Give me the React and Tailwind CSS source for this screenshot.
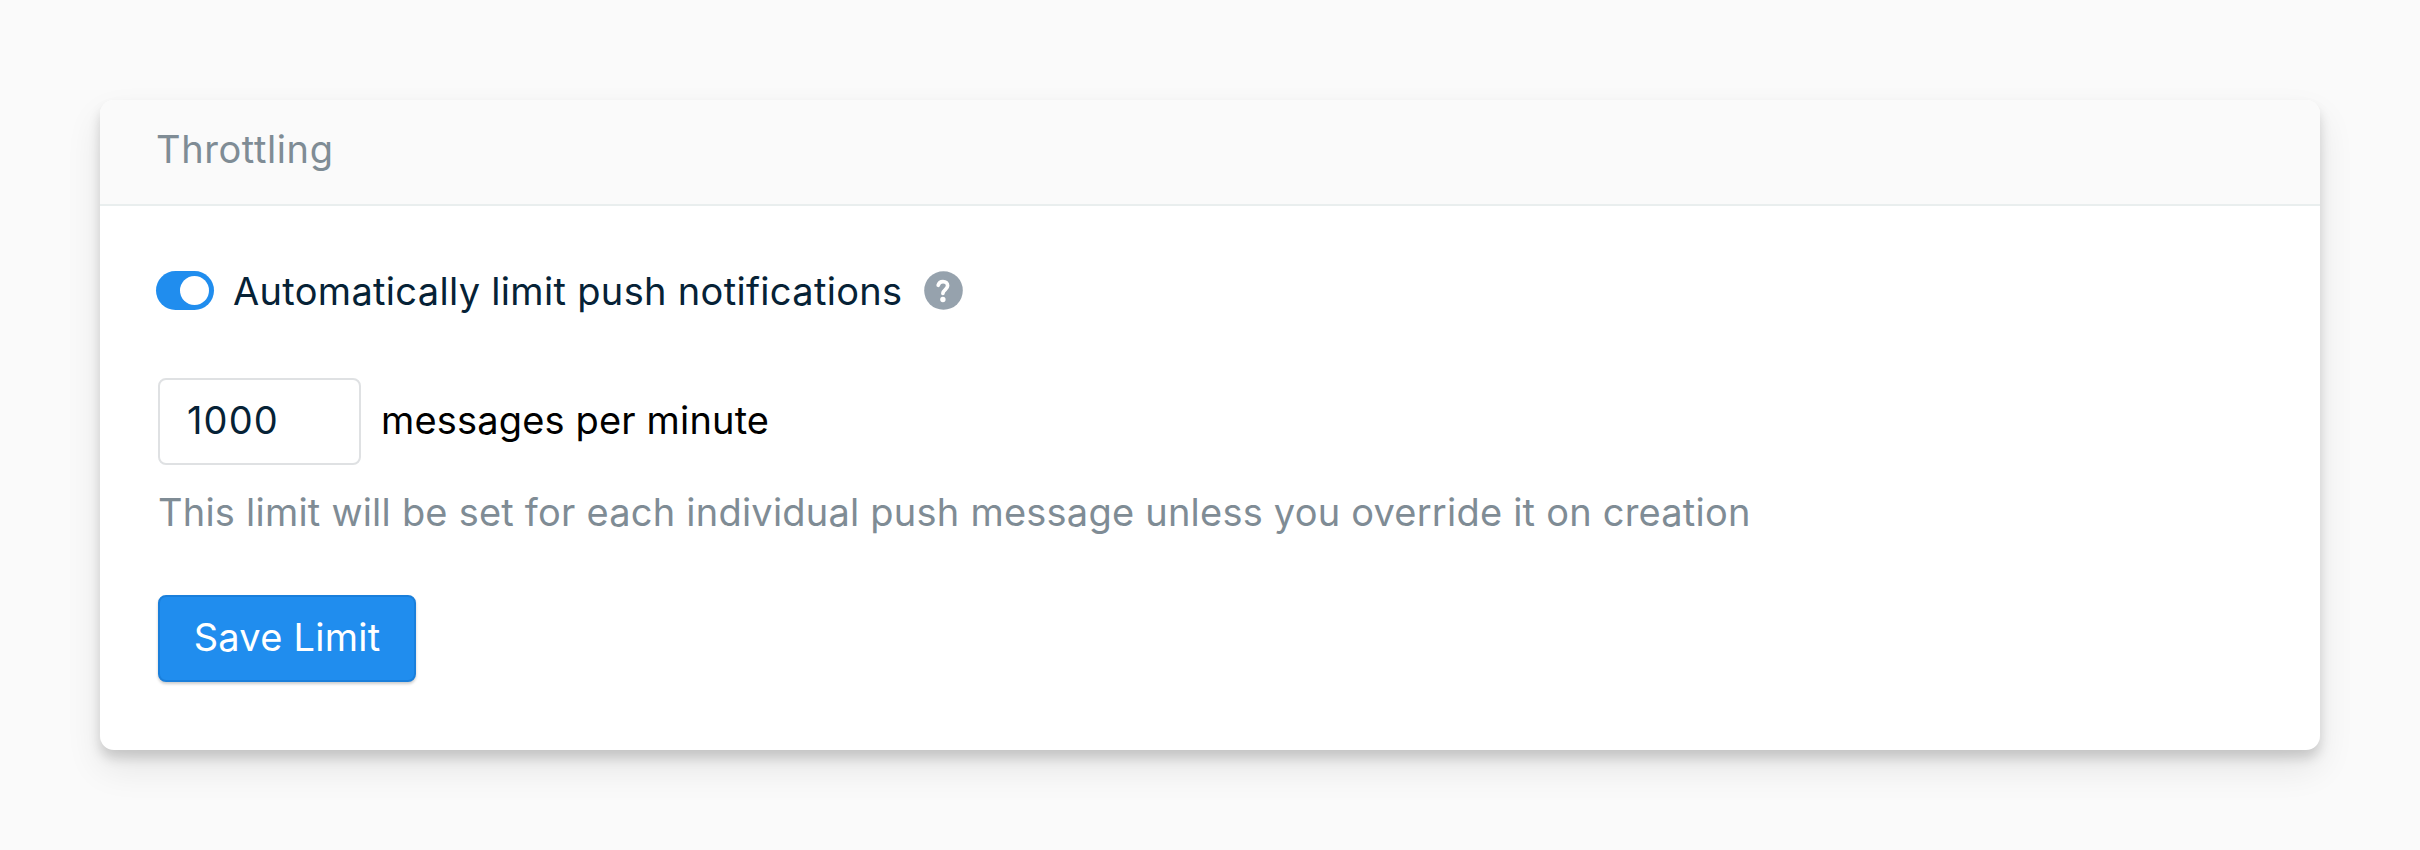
import { useState } from 'react';

function Toggle({ checked, onChange }) {
    return (
        <button
            type="button"
            role="switch"
            aria-checked={checked}
            onClick={() => onChange(!checked)}
            className={`mb-px flex h-[39px] w-[58px] items-center rounded-full px-[5px] ${checked ? 'justify-end bg-[#208dee]' : 'justify-start bg-[#96a2ad]'}`}
        >
            <span className="h-[29px] w-[29px] rounded-full bg-white"></span>
        </button>
    );
}

function HelpIcon() {
    return (
        <svg viewBox="0 0 39 39" className="mb-px h-[39px] w-[39px]" fill="none">
            <circle cx="19.5" cy="19.5" r="19.3" fill="#96a2ad" />
            <path d="M14.2 14.3C14.8 11.8 16.5 10.6 19 10.6C21.7 10.6 23.6 12.2 23.6 14.8C23.6 18.4 19.1 18.7 18.9 22.4" stroke="#fff" strokeWidth="3.7" strokeLinecap="round" strokeLinejoin="round" />
            <circle cx="18.9" cy="28.5" r="2.7" fill="#fff" />
        </svg>
    );
}

export default function App() {
    const [enabled, setEnabled] = useState(true);
    const [limit, setLimit] = useState('1000');

    return (
        <div className="h-[850px] bg-[#fafafa] p-[100px] font-[Inter,sans-serif] text-[38px] leading-[46px]">
            <div className="h-[650px] overflow-hidden rounded-[14px] bg-white shadow-[0_8px_12px_rgba(0,0,0,0.15),0_18px_36px_rgba(0,0,0,0.09)]">
                <header className="flex h-[106px] items-center border-b-2 border-[#e9eeee] bg-[#fafafa] px-14 pb-[6px]">
                    <h2 className="tracking-[0.6px] text-[#7f8c95]">Throttling</h2>
                </header>

                <form className="flex flex-col items-start px-[58px] pt-[62px]" onSubmit={(e) => e.preventDefault()}>
                    <div className="-ml-[2px] flex items-center">
                        <Toggle checked={enabled} onChange={setEnabled} />
                        <span className="ml-[19px] w-[691px] whitespace-nowrap tracking-[0.32px] text-[#062236]">Automatically limit push notifications</span>
                        <HelpIcon />
                    </div>

                    <label className="mt-[64px] flex items-center">
                        <input
                            type="text"
                            value={limit}
                            onChange={(e) => setLimit(e.target.value)}
                            className="h-[87px] w-[203px] rounded-lg border-2 border-[#dfe1e3] px-[27px] pb-1 tracking-[1.1px] text-[#062236] outline-none"
                        />
                        <span className="ml-5 pb-1 tracking-[0.16px] text-black">messages per minute</span>
                    </label>

                    <p className="mt-[24px] tracking-[0.22px] text-[#7f8c95]">
                        This limit will be set for each individual push message unless you override it on creation
                    </p>

                    <button type="submit" className="mt-[60px] h-[87px] w-[258px] rounded-lg border-2 border-[#1a7fdb] bg-[#208dee] pb-[3px] tracking-[0.25px] text-white shadow-[0_2px_3px_rgba(0,0,0,0.2)]">
                        Save Limit
                    </button>
                </form>
            </div>
        </div>
    );
}
